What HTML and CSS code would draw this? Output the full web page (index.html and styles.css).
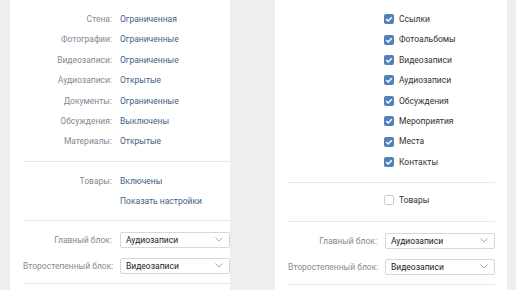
FILE: index.html
```html
<!DOCTYPE html>
<html lang="ru">
<head>
<meta charset="utf-8">
<link rel="stylesheet" href="styles.css">
</head>
<body>
<div class="page">
  <div class="panel panel-left">
    <div class="inner">
      <div class="section s-top">
        <div class="row"><span class="label">Стена:</span><span class="value">Ограниченная</span></div>
        <div class="row"><span class="label">Фотографии:</span><span class="value">Ограниченные</span></div>
        <div class="row"><span class="label">Видеозаписи:</span><span class="value">Ограниченные</span></div>
        <div class="row"><span class="label">Аудиозаписи:</span><span class="value">Открытые</span></div>
        <div class="row"><span class="label">Документы:</span><span class="value">Ограниченные</span></div>
        <div class="row"><span class="label">Обсуждения:</span><span class="value">Выключены</span></div>
        <div class="row"><span class="label">Материалы:</span><span class="value">Открытые</span></div>
      </div>
      <div class="section s-goods">
        <div class="row"><span class="label">Товары:</span><span class="value">Включены</span></div>
        <div class="row"><span class="label"></span><span class="value">Показать настройки</span></div>
      </div>
      <div class="section s-blocks">
        <div class="srow"><span class="label">Главный блок:</span><div class="select"><span>Аудиозаписи</span><svg class="chev" viewBox="0 0 8 5" width="8" height="5"><path d="M0.5 0.5 L4 4 L7.5 0.5" fill="none" stroke="#a3adb8" stroke-width="1"/></svg></div></div>
        <div class="srow"><span class="label">Второстепенный блок:</span><div class="select"><span>Видеозаписи</span><svg class="chev" viewBox="0 0 8 5" width="8" height="5"><path d="M0.5 0.5 L4 4 L7.5 0.5" fill="none" stroke="#a3adb8" stroke-width="1"/></svg></div></div>
      </div>
    </div>
  </div>
  <div class="panel panel-right">
    <div class="inner">
      <div class="section s-checks">
        <div class="crow"><span class="cb on"><svg viewBox="0 0 10 10" width="10" height="10"><path d="M2.3 5.1 L4.2 7 L7.8 3.2" fill="none" stroke="#fff" stroke-width="1.5"/></svg></span><span class="ctext">Ссылки</span></div>
        <div class="crow"><span class="cb on"><svg viewBox="0 0 10 10" width="10" height="10"><path d="M2.3 5.1 L4.2 7 L7.8 3.2" fill="none" stroke="#fff" stroke-width="1.5"/></svg></span><span class="ctext">Фотоальбомы</span></div>
        <div class="crow"><span class="cb on"><svg viewBox="0 0 10 10" width="10" height="10"><path d="M2.3 5.1 L4.2 7 L7.8 3.2" fill="none" stroke="#fff" stroke-width="1.5"/></svg></span><span class="ctext">Видеозаписи</span></div>
        <div class="crow"><span class="cb on"><svg viewBox="0 0 10 10" width="10" height="10"><path d="M2.3 5.1 L4.2 7 L7.8 3.2" fill="none" stroke="#fff" stroke-width="1.5"/></svg></span><span class="ctext">Аудиозаписи</span></div>
        <div class="crow"><span class="cb on"><svg viewBox="0 0 10 10" width="10" height="10"><path d="M2.3 5.1 L4.2 7 L7.8 3.2" fill="none" stroke="#fff" stroke-width="1.5"/></svg></span><span class="ctext">Обсуждения</span></div>
        <div class="crow"><span class="cb on"><svg viewBox="0 0 10 10" width="10" height="10"><path d="M2.3 5.1 L4.2 7 L7.8 3.2" fill="none" stroke="#fff" stroke-width="1.5"/></svg></span><span class="ctext">Мероприятия</span></div>
        <div class="crow"><span class="cb on"><svg viewBox="0 0 10 10" width="10" height="10"><path d="M2.3 5.1 L4.2 7 L7.8 3.2" fill="none" stroke="#fff" stroke-width="1.5"/></svg></span><span class="ctext">Места</span></div>
        <div class="crow"><span class="cb on"><svg viewBox="0 0 10 10" width="10" height="10"><path d="M2.3 5.1 L4.2 7 L7.8 3.2" fill="none" stroke="#fff" stroke-width="1.5"/></svg></span><span class="ctext">Контакты</span></div>
      </div>
      <div class="section s-goods2">
        <div class="crow"><span class="cb off"></span><span class="ctext">Товары</span></div>
      </div>
      <div class="section s-blocks">
        <div class="srow"><span class="label">Главный блок:</span><div class="select"><span>Аудиозаписи</span><svg class="chev" viewBox="0 0 8 5" width="8" height="5"><path d="M0.5 0.5 L4 4 L7.5 0.5" fill="none" stroke="#a3adb8" stroke-width="1"/></svg></div></div>
        <div class="srow"><span class="label">Второстепенный блок:</span><div class="select"><span>Видеозаписи</span><svg class="chev" viewBox="0 0 8 5" width="8" height="5"><path d="M0.5 0.5 L4 4 L7.5 0.5" fill="none" stroke="#a3adb8" stroke-width="1"/></svg></div></div>
      </div>
    </div>
  </div>
</div>
</body>
</html>
```

FILE: styles.css
```css
* { box-sizing: border-box; }
html, body {
  margin: 0;
  padding: 0;
  background: #edeef0;
  width: 516px;
  height: 290px;
  overflow: hidden;
  font-family: Roboto, "Open Sans", "Liberation Sans", sans-serif;
  font-size: 8.5px;
}
.page {
  display: flex;
  height: 290px;
}
.panel {
  background: #fff;
  height: 290px;
  overflow: hidden;
}
.panel-left {
  margin-left: 10px;
  width: 220px;
}
.panel-right {
  margin-left: 45px;
  width: 232px;
}
.inner {
  width: 232px;
  padding: 0 12px 0 13px;
}
.section {
  border-bottom: 1px solid #e7e8ec;
}
.s-top { padding: 9px 0 9px; }
.s-goods { padding: 9px 0 8px; }
.s-blocks { padding: 11px 0 9px; }
.s-checks { padding: 9px 0 10px; }
.s-goods2 { padding: 7px 0 10px; }

.row {
  display: grid;
  grid-template-columns: 89px 110px;
  column-gap: 8px;
  height: 20.4px;
  line-height: 20.4px;
}
.label {
  text-align: right;
  color: #828a94;
  white-space: nowrap;
}
.value {
  color: #3f5f86;
  white-space: nowrap;
}
.srow {
  display: grid;
  grid-template-columns: 89px 110px;
  column-gap: 8px;
  align-items: center;
  height: 16px;
}
.srow + .srow { margin-top: 10px; }
.srow .label { line-height: 16px; }
.select {
  height: 16px;
  border: 1px solid #d3d9de;
  border-radius: 2px;
  display: flex;
  align-items: center;
  justify-content: space-between;
  padding: 0 6px 0 5px;
  color: #222;
  white-space: nowrap;
}
.chev { display: block; }

.crow {
  display: flex;
  align-items: center;
  height: 20.4px;
  padding-left: 96px;
  gap: 5px;
  color: #333;
}
.cb {
  width: 10px;
  height: 10px;
  border-radius: 2px;
  flex: none;
  display: block;
}
.cb svg { display: block; }
.cb.on { background: #5181b8; }
.cb.off { border: 1px solid #c5ced8; background: #fff; }
.ctext { line-height: 20.4px; white-space: nowrap; }
```
